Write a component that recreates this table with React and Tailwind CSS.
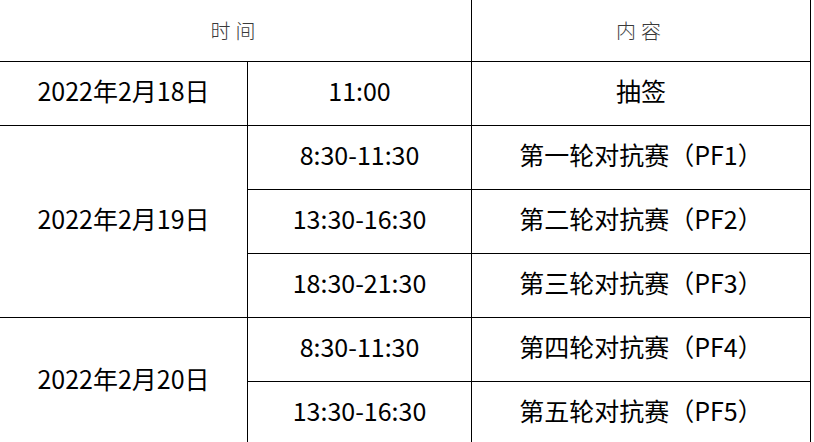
import React from "react";

const font = { fontFamily: '"Microsoft YaHei", "Noto Sans CJK SC", sans-serif' };

const rows = [
  { date: "2022年2月18日", span: 1, items: [["11:00", "抽签"]] },
  {
    date: "2022年2月19日",
    span: 3,
    items: [
      ["8:30-11:30", "第一轮对抗赛（PF1）"],
      ["13:30-16:30", "第二轮对抗赛（PF2）"],
      ["18:30-21:30", "第三轮对抗赛（PF3）"],
    ],
  },
  {
    date: "2022年2月20日",
    span: 2,
    items: [
      ["8:30-11:30", "第四轮对抗赛（PF4）"],
      ["13:30-16:30", "第五轮对抗赛（PF5）"],
    ],
  },
];

const rowSpan = {
  1: "row-span-1",
  2: "row-span-2",
  3: "row-span-3",
};

export default function App() {
  return (
    <div className="w-[814px] h-[442px] overflow-hidden bg-white" style={font}>
      <div className="grid grid-cols-[248px_224px_339px] grid-rows-[62px] auto-rows-[64px] text-[25px] text-black">
        <div className="col-span-2 flex items-center justify-center border-r border-b border-black text-[20px] font-light tracking-[5px] text-[#3a3a3a]">
          时间
        </div>
        <div className="flex items-center justify-center border-r border-b border-black text-[20px] font-light tracking-[5px] text-[#3a3a3a]">
          内容
        </div>
        {rows.map((r) => (
          <React.Fragment key={r.date}>
            <div
              className={`${rowSpan[r.span]} flex items-center justify-center pb-[5px] border-r border-b border-black`}
            >
              {r.date}
            </div>
            {r.items.map(([time, content], i) => (
              <React.Fragment key={i}>
                <div className="col-start-2 flex items-center justify-center pb-[5px] border-r border-b border-black">
                  {time}
                </div>
                <div className="flex items-center justify-center pb-[5px] border-r border-b border-black">
                  {content}
                </div>
              </React.Fragment>
            ))}
          </React.Fragment>
        ))}
      </div>
    </div>
  );
}
